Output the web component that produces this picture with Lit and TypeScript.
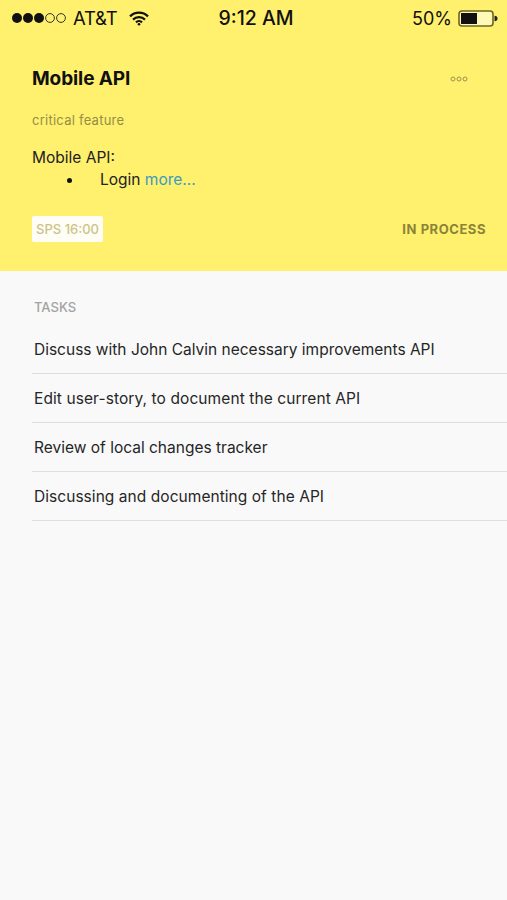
import { LitElement, html, css } from "lit";
import { customElement } from "lit/decorators.js";

const tasks = [
  "Discuss with John Calvin necessary improvements API",
  "Edit user-story, to document the current API",
  "Review of local changes tracker",
  "Discussing and documenting of the API",
];

@customElement("app-root")
export class AppRoot extends LitElement {
  static styles = css`
    :host { display: block; width: 507px; height: 900px; background: #f9f9f9; font-family: Inter, "Liberation Sans", sans-serif; color: #1a1a1a; overflow: hidden; }
    .hero { background: #fff06e; height: 271px; box-sizing: border-box; display: flex; flex-direction: column; }
    .status { height: 36px; display: grid; grid-template-columns: 1fr auto 1fr; align-items: center; padding: 0 9px 0 11px; font-size: 18px; color: #111; }
    .left, .right { display: flex; align-items: center; }
    .right { justify-content: flex-end; gap: 6px; font-size: 18px; }
    .carrier { margin-left: 6px; margin-right: 11px; font-size: 18.5px; letter-spacing: -0.2px; }
    .time { font-weight: 500; font-size: 19.5px; margin-left: 3px; }
    .body { padding: 0 21px 0 32px; }
    .title-row { display: flex; justify-content: space-between; align-items: center; margin-top: 31px; height: 24px; }
    h1 { margin: 0; font-size: 19px; line-height: 24px; font-weight: 700; color: #111; letter-spacing: -0.1px; }
    .dots { display: block; margin-right: 18px; }
    .sub { margin-top: 21px; font-size: 13px; line-height: 16px; color: #948d49; letter-spacing: 0.25px; }
    .desc { margin-top: 19px; font-size: 15.5px; line-height: 22px; color: #222; }
    ul { margin: 0; padding: 0 0 0 35px; list-style: none; }
    li { display: flex; align-items: center; gap: 28px; }
    .bullet { width: 5px; height: 5px; border-radius: 50%; background: #111; flex: none; }
    a { color: #3d9bc0; text-decoration: none; }
    .foot { display: flex; justify-content: space-between; align-items: center; margin-top: 25px; }
    .badge { width: 71px; height: 26px; background: #fffef6; color: #cdc289; font-size: 13px; font-weight: 500; display: flex; align-items: center; justify-content: center; border-radius: 2px; white-space: nowrap; }
    .state { font-size: 13px; font-weight: 700; color: #8b8438; letter-spacing: 0.55px; }
    .label { margin: 28px 0 0 34px; font-size: 13px; line-height: 16px; color: #a3a3a3; font-weight: 500; }
    .rows { margin: 10px 0 0 32px; }
    .row { box-sizing: border-box; height: 49px; border-bottom: 1px solid #dedede; display: flex; align-items: center; padding-left: 2px; font-size: 15.5px; color: #262626; white-space: nowrap; }
    .row:nth-child(2) { letter-spacing: 0.09px; }
    .row:nth-child(4) { letter-spacing: 0.05px; }
  `;

  render() {
    return html`
      <div class="hero">
        <div class="status">
          <div class="left">
            <svg width="56" height="12" viewBox="0 0 56 12">
              <circle cx="6" cy="6" r="5" fill="#111" />
              <circle cx="17" cy="6" r="5" fill="#111" />
              <circle cx="28" cy="6" r="5" fill="#111" />
              <circle cx="39" cy="6" r="4.4" fill="none" stroke="#333" stroke-width="1" />
              <circle cx="50" cy="6" r="4.4" fill="none" stroke="#333" stroke-width="1" />
            </svg>
            <span class="carrier">AT&amp;T</span>
            <svg width="20" height="15" viewBox="0 0 20 15" fill="none" stroke="#111" stroke-width="2.2">
              <path d="M1 5.4a12.8 12.8 0 0 1 18 0" />
              <path d="M4 8.6a8.5 8.5 0 0 1 12 0" />
              <path d="M7 11.4a4.3 4.3 0 0 1 6 0" />
              <circle cx="10" cy="13.2" r="1.3" fill="#111" stroke="none" />
            </svg>
          </div>
          <div class="time">9:12 AM</div>
          <div class="right">
            <span>50%</span>
            <svg width="40" height="17" viewBox="0 0 40 17">
              <rect x="1" y="1" width="34" height="15" rx="3" fill="#fff9b8" stroke="#6b6522" stroke-width="1.6" />
              <rect x="3" y="3" width="16" height="11" fill="#111" />
              <path d="M36.5 5.8c2 0 3 1.2 3 2.7s-1 2.7-3 2.7z" fill="#222" />
            </svg>
          </div>
        </div>
        <div class="body">
          <div class="title-row">
            <h1>Mobile API</h1>
            <svg class="dots" width="18" height="6" viewBox="0 0 18 6" fill="none" stroke="#9b9350" stroke-width="1">
              <circle cx="3" cy="3" r="2" />
              <circle cx="9" cy="3" r="2" />
              <circle cx="15" cy="3" r="2" />
            </svg>
          </div>
          <div class="sub">critical feature</div>
          <div class="desc">
            Mobile API:
            <ul><li><span class="bullet"></span><span>Login <a>more...</a></span></li></ul>
          </div>
          <div class="foot">
            <div class="badge">SPS 16:00</div>
            <div class="state">IN PROCESS</div>
          </div>
        </div>
      </div>
      <div class="label">TASKS</div>
      <div class="rows">
        ${tasks.map((t) => html`<div class="row">${t}</div>`)}
      </div>
    `;
  }
}
